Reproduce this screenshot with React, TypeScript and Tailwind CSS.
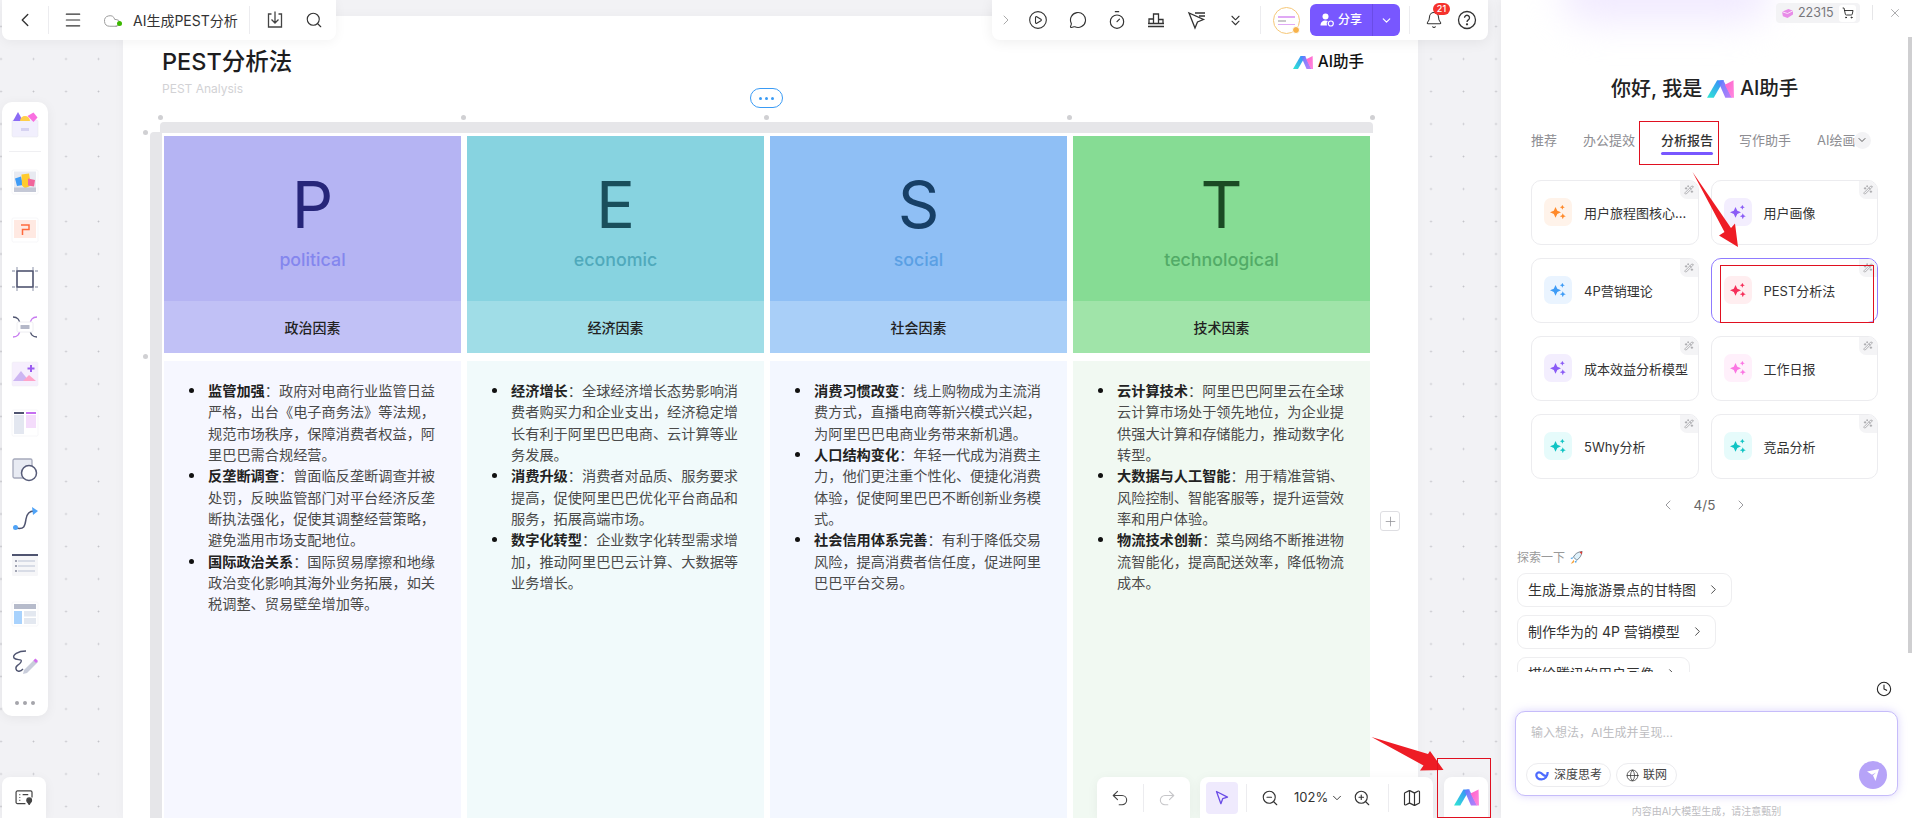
import {
  Bell,
  ChevronDown,
  ChevronLeft,
  ChevronRight,
  ChevronsDown,
  CirclePlay,
  Clock,
  Cloud,
  Globe,
  Map as MapIcon,
  Menu,
  MessageCircle,
  Plus,
  Redo2,
  Search,
  ShoppingCart,
  Timer,
  Undo2,
  WandSparkles,
  X,
  ZoomIn,
  ZoomOut,
} from "lucide-react";
import type { ReactNode } from "react";

const columns = [
  {
    letter: "P",
    en: "political",
    title: "政治因素",
    head: "bg-[#b5b4f3]",
    sub: "bg-[#c1c1f6]",
    body: "bg-[#f6f7ff]",
    ink: "text-[#262579]",
    enInk: "text-[#8486ee]",
    items: [
      ["监管加强", "政府对电商行业监管日益严格\uFF0C出台《电子商务法》等法规\uFF0C规范市场秩序\uFF0C保障消费者权益\uFF0C阿里巴巴需合规经营。"],
      ["反垄断调查", "曾面临反垄断调查并被处罚\uFF0C反映监管部门对平台经济反垄断执法强化\uFF0C促使其调整经营策略\uFF0C避免滥用市场支配地位。"],
      ["国际政治关系", "国际贸易摩擦和地缘政治变化影响其海外业务拓展\uFF0C如关税调整、贸易壁垒增加等。"],
    ],
  },
  {
    letter: "E",
    en: "economic",
    title: "经济因素",
    head: "bg-[#87d3e0]",
    sub: "bg-[#a0dde7]",
    body: "bg-[#f1fafb]",
    ink: "text-[#1a4f5c]",
    enInk: "text-[#4fa9bb]",
    items: [
      ["经济增长", "全球经济增长态势影响消费者购买力和企业支出\uFF0C经济稳定增长有利于阿里巴巴电商、云计算等业务发展。"],
      ["消费升级", "消费者对品质、服务要求提高\uFF0C促使阿里巴巴优化平台商品和服务\uFF0C拓展高端市场。"],
      ["数字化转型", "企业数字化转型需求增加\uFF0C推动阿里巴巴云计算、大数据等业务增长。"],
    ],
  },
  {
    letter: "S",
    en: "social",
    title: "社会因素",
    head: "bg-[#8fbff5]",
    sub: "bg-[#a9cff8]",
    body: "bg-[#f3f7ff]",
    ink: "text-[#173f66]",
    enInk: "text-[#5a9fe4]",
    items: [
      ["消费习惯改变", "线上购物成为主流消费方式\uFF0C直播电商等新兴模式兴起\uFF0C为阿里巴巴电商业务带来新机遇。"],
      ["人口结构变化", "年轻一代成为消费主力\uFF0C他们更注重个性化、便捷化消费体验\uFF0C促使阿里巴巴不断创新业务模式。"],
      ["社会信用体系完善", "有利于降低交易风险\uFF0C提高消费者信任度\uFF0C促进阿里巴巴平台交易。"],
    ],
  },
  {
    letter: "T",
    en: "technological",
    title: "技术因素",
    head: "bg-[#86dc94]",
    sub: "bg-[#a0e4a9]",
    body: "bg-[#f1f9f2]",
    ink: "text-[#1b4a24]",
    enInk: "text-[#52ab67]",
    items: [
      ["云计算技术", "阿里巴巴阿里云在全球云计算市场处于领先地位\uFF0C为企业提供强大计算和存储能力\uFF0C推动数字化转型。"],
      ["大数据与人工智能", "用于精准营销、风险控制、智能客服等\uFF0C提升运营效率和用户体验。"],
      ["物流技术创新", "菜鸟网络不断推进物流智能化\uFF0C提高配送效率\uFF0C降低物流成本。"],
    ],
  },
];

const templates = [
  { name: "用户旅程图核心...", box: "bg-[#fff3ea]", star: "#ff8a2b" },
  { name: "用户画像", box: "bg-[#f3eefe]", star: "#8b5cf6" },
  { name: "4P营销理论", box: "bg-[#eaf4ff]", star: "#3f9cf6" },
  { name: "PEST分析法", box: "bg-[#ffeef0]", star: "#f5305a", active: true },
  { name: "成本效益分析模型", box: "bg-[#f3eefe]", star: "#8b5cf6" },
  { name: "工作日报", box: "bg-[#fff0fb]", star: "#fb76e3" },
  { name: "5Why分析", box: "bg-[#e6fbfb]", star: "#12c4c4" },
  { name: "竞品分析", box: "bg-[#e6fbfb]", star: "#12c4c4" },
];

function Logo({ className }: { className?: string }) {
  return (
    <svg viewBox="0 0 28 18" className={className}>
      <defs>
        <linearGradient id="lg-a" x1="0" y1="1" x2="1" y2="0">
          <stop offset="0" stopColor="#2fe8d2" />
          <stop offset="1" stopColor="#3b82ff" />
        </linearGradient>
        <linearGradient id="lg-b" x1="0" y1="0" x2="1" y2="1">
          <stop offset="0" stopColor="#5b7bff" />
          <stop offset="1" stopColor="#b978f8" />
        </linearGradient>
        <linearGradient id="lg-c" x1="0" y1="0" x2="1" y2="1">
          <stop offset="0" stopColor="#ff5fc9" />
          <stop offset="1" stopColor="#ff8ae0" />
        </linearGradient>
      </defs>
      <path d="M0 18 10.500 0h7L7 18z" fill="url(#lg-a)" />
      <path d="M12 2 14.500 0h2.500l9 18h-7z" fill="url(#lg-b)" opacity="0.95" />
      <path d="M18.500 4.500 27.500 0l.5 18h-2.500z" fill="url(#lg-c)" />
    </svg>
  );
}

function Sparks({ color }: { color: string }) {
  return (
    <svg viewBox="0 0 16 16" className="w-[16px] h-[16px]" fill={color}>
      <path d="M5.500 3 7.300 6.700 11 8.300 7.300 10l-1.800 3.800L3.800 10 0 8.300l3.800-1.600z" />
      <path d="M12.300 .8l.8 1.700 1.700.8-1.700.7-.8 1.800-.7-1.800-1.700-.7 1.700-.8z" />
      <path d="M12.800 9.200l.9 2.100 2.100.9-2.100.9-.9 2.100-.9-2.100-2.100-.9 2.100-.9z" />
    </svg>
  );
}

function Divider({ className = "" }: { className?: string }) {
  return <div className={`w-px bg-[#ececef] ${className}`} />;
}

// the coloured tiles of the left rail, all drawn on a 26 box
function Tile({ children }: { children: ReactNode }) {
  return (
    <svg viewBox="0 0 26 26" className="w-[26px] h-[26px] overflow-visible">
      {children}
    </svg>
  );
}

const railIcons = [
  <Tile key="sticker">
    <rect x="0" y="8" width="26" height="17" rx="1.500" fill="#f1effd" stroke="#e4e4ea" strokeWidth="0.5" />
    <rect x="9" y="16" width="8" height="3" fill="#d6d2f1" />
    <path d="M1 9 6 0l5 9z" fill="#8b6bf5" />
    <path d="M8 9a5 5 0 0 1 10 0z" fill="#ffcf4a" />
    <path d="m15.500 4 6-3.500 4 5-4 4.500z" fill="#f96fe0" />
  </Tile>,
  <Tile key="notes">
    <rect x="0" y="0" width="26" height="24" rx="1.500" fill="#fff" stroke="#ececf0" strokeWidth="0.5" />
    <rect x="2" y="1.500" width="22" height="20" fill="#e8eaf1" />
    <path d="M3 8.500 9 6.500l2 8.500-6 1z" fill="#3f9cf6" />
    <path d="M9.500 4.500 17 3.500l2 12-6 3-3-3z" fill="#ffcb2e" />
    <path d="m16 8.500 7 1.500-1 6.500-6-1z" fill="#f1659b" />
    <rect x="2" y="17.500" width="22" height="4.500" fill="#c4c8d6" />
  </Tile>,
  <Tile key="ppt">
    <rect x="0" y="0" width="26" height="24" rx="1.500" fill="#fff" stroke="#ececf0" strokeWidth="0.5" />
    <rect x="2" y="2" width="22" height="18" fill="#ffe9e2" />
    <path d="M9 7h8v4.500h-6.500V17" fill="none" stroke="#ff6a3d" strokeWidth="1.500" />
  </Tile>,
  <Tile key="frame">
    <rect x="5" y="5" width="16" height="16" fill="none" stroke="#4f5470" strokeWidth="1.600" />
    <path d="M5 1v3M21 1v3M5 22v3M21 22v3M0 5h3M0 21h3M23 5h3M23 21h3" stroke="#a8adbd" strokeWidth="1.300" />
  </Tile>,
  <Tile key="mindmap">
    <path d="M1 3c5 0 6 3 7 6" fill="none" stroke="#4f5470" strokeWidth="1.300" />
    <path d="M25 3c-5 0-6 3-7 6" fill="none" stroke="#c77af0" strokeWidth="1.300" />
    <path d="M1 23c5 0 6-3 7-6" fill="none" stroke="#c77af0" strokeWidth="1.300" />
    <path d="M25 23c-5 0-6-3-7-6" fill="none" stroke="#4f5470" strokeWidth="1.300" />
    <rect x="5" y="8" width="16" height="10" rx="1.500" fill="#fff" stroke="#eeeef2" />
    <rect x="8.500" y="11" width="9" height="4" rx="0.500" fill="#b4b8c8" />
  </Tile>,
  <Tile key="image">
    <rect x="0" y="0" width="26" height="24" rx="1.500" fill="#f6effd" stroke="#ececf0" strokeWidth="0.5" />
    <path d="M1 19 9 9l8 10z" fill="#cdb6f2" />
    <path d="M11 19l6-6 7 6z" fill="#ffa4c9" />
    <path d="M19 3v7M15.500 6.500h7" stroke="#9a5cf0" strokeWidth="2" />
  </Tile>,
  <Tile key="columns">
    <rect x="0" y="0" width="26" height="26" rx="1.500" fill="#fff" stroke="#ececf0" strokeWidth="0.5" />
    <rect x="2" y="2" width="10" height="2" fill="#4f5470" />
    <rect x="14" y="2" width="10" height="2" fill="#c56ff0" />
    <rect x="2" y="5" width="10" height="19" fill="#e3e7f0" />
    <rect x="14" y="5" width="10" height="13" fill="#f4dcfb" />
  </Tile>,
  <Tile key="shape">
    <rect x="1" y="1" width="19" height="19" rx="1.500" fill="#e8ebf3" stroke="#a5a9bb" strokeWidth="1.300" />
    <circle cx="17" cy="15" r="7.500" fill="#fff" stroke="#565b78" strokeWidth="1.500" />
  </Tile>,
  <Tile key="connector">
    <path d="M4 22c9 2 9-3 10-9s4-8 8-8" fill="none" stroke="#4f5470" strokeWidth="1.500" />
    <circle cx="3.500" cy="21.500" r="2.500" fill="#4fa3f7" />
    <path d="m20 1 6 4-5 4z" fill="#4fa3f7" />
  </Tile>,
  <Tile key="list">
    <rect x="0" y="1" width="26" height="21" rx="1.500" fill="#f6f6f8" />
    <rect x="0" y="0" width="26" height="2" fill="#4f5470" />
    <path d="M6 7h17M6 12h17M6 17h17" stroke="#d8dce6" strokeWidth="2" />
    <path d="M4 6v2M4 11v2M4 16v2" stroke="#4f5470" strokeWidth="1" />
  </Tile>,
  <Tile key="table">
    <rect x="0" y="0" width="26" height="24" rx="1.500" fill="#fff" stroke="#ececf0" strokeWidth="0.5" />
    <rect x="2" y="2" width="22" height="5" fill="#b6bbcb" />
    <rect x="2" y="9" width="8" height="13" fill="#a8d2fd" />
    <rect x="12" y="9" width="12" height="5.500" fill="#e3e8f0" />
    <rect x="12" y="16" width="12" height="6" fill="#e3e8f0" />
  </Tile>,
  <Tile key="pen">
    <path d="M14 1C6 1 0 5 2 8s9 0 7 4-6 3-5 7 5 2 7 0" fill="none" stroke="#4f5470" strokeWidth="1.400" />
    <path d="m12 20 11-11 3 3-11 11-4 1z" fill="#c9cddb" />
    <path d="m21.500 10.500 2-2 2.500 2.500-2 2z" fill="#d66cf0" />
  </Tile>,
];

function Rail() {
  return (
    <div className="absolute left-[2px] top-[102px] w-[46px] h-[614px] bg-white rounded-[10px] shadow-[0_2px_12px_rgba(0,0,0,0.06)] flex flex-col items-center pt-[10px]">
      {railIcons[0]}
      <div className="w-[32px] h-px bg-[#efeff2] mt-[13px] mb-[18px]" />
      <div className="flex flex-col items-center gap-[22px]">{railIcons.slice(1)}</div>
      <div className="flex gap-[4px] mt-[25px]">
        <span className="w-[4px] h-[4px] rounded-full bg-[#a5a5ab]" />
        <span className="w-[4px] h-[4px] rounded-full bg-[#a5a5ab]" />
        <span className="w-[4px] h-[4px] rounded-full bg-[#a5a5ab]" />
      </div>
    </div>
  );
}

function TopLeftBar() {
  return (
    <div className="absolute left-[2px] top-0 w-[334px] h-[40px] bg-white rounded-b-[8px] shadow-[0_2px_12px_rgba(0,0,0,0.05)] flex items-center text-[#333]">
      <div className="w-[46px] flex justify-center">
        <ChevronLeft size={22} strokeWidth={1.5} />
      </div>
      <Divider className="h-[28px]" />
      <Menu size={20} strokeWidth={1.4} className="ml-[14px]" />
      <div className="relative ml-[20px] w-[19px] h-[16px]">
        <Cloud size={18} strokeWidth={1.3} className="text-[#999]" />
        <span className="absolute right-[0px] bottom-[2px] w-[5px] h-[5px] rounded-full bg-[#3cb800]" />
      </div>
      <span className="ml-[11px] text-[14px] text-[#333] w-[116px] whitespace-nowrap">AI生成PEST分析</span>
      <Divider className="h-[28px]" />
      <svg viewBox="0 0 20 20" className="ml-[15px] w-[20px] h-[20px]" fill="none" stroke="#444" strokeWidth="1.300">
        <path d="M6.500 4H3.500v13h13V4h-3M10 1.500V13M6.500 9.500 10 13l3.500-3.500" />
      </svg>
      <Search size={18} strokeWidth={1.5} className="ml-[20px]" />
    </div>
  );
}

function TopRightBar() {
  return (
    <div className="absolute left-[992px] top-0 w-[496px] h-[40px] bg-white rounded-b-[8px] shadow-[0_2px_14px_rgba(0,0,0,0.07)] flex items-center text-[#333]">
      <ChevronRight size={16} strokeWidth={1.5} className="ml-[6px] text-[#aaa]" />
      <CirclePlay size={20} strokeWidth={1.3} className="ml-[14px]" />
      <MessageCircle size={18} strokeWidth={1.5} className="ml-[21px]" />
      <Timer size={20} strokeWidth={1.4} className="ml-[20px]" />
      <svg viewBox="0 0 18 18" className="ml-[20px] w-[18px] h-[18px]" fill="none" stroke="#333" strokeWidth="1.300">
        <path d="M2 12.500V8h4.500V3h5v5.500H16v4M6.500 8v4.500M11.500 8.500v4M1 15.500h16M1 12.500h16" />
      </svg>
      <svg viewBox="0 0 20 20" className="ml-[22px] w-[20px] h-[20px]" fill="none" stroke="#333" strokeWidth="1.300">
        <path d="m2 3 6 15 2.500-6 6-2.500zM8 3h10M12 6h6" />
      </svg>
      <ChevronsDown size={17} strokeWidth={1.5} className="ml-[20px]" />
      <Divider className="ml-[16px] h-[28px]" />
      <div className="relative ml-[12px] w-[27px] h-[27px] rounded-full border border-[#f6c777] bg-white flex flex-col justify-center gap-[2px] px-[4px] overflow-visible">
        <span className="h-[2px] bg-[#e0a9f5]" />
        <span className="h-[2px] w-[8px] bg-[#c9c9c9]" />
        <span className="h-[1px] bg-[#e0a9f5]" />
        <span className="absolute -right-[1px] -bottom-[1px] w-[8px] h-[8px] rounded-full bg-[#f7b24a] border border-white" />
      </div>
      <div className="ml-[10px] w-[90px] h-[32px] rounded-[6px] bg-[#7857ff] text-white flex items-center">
        <div className="w-[62px] flex items-center justify-center gap-[4px]">
          <svg viewBox="0 0 14 14" className="w-[14px] h-[14px]" fill="#fff">
            <circle cx="5.500" cy="3.500" r="3" />
            <path d="M.5 12.500c0-3 2-5 5-5 1 0 1.700.2 2.300.6A3.800 3.800 0 0 0 7 12.500z" />
            <circle cx="10.800" cy="10.500" r="2.500" fill="none" stroke="#fff" strokeWidth="1.200" />
          </svg>
          <span className="text-[12px] font-medium">分享</span>
        </div>
        <div className="w-px h-full bg-[#6a4ce6]" />
        <ChevronDown size={13} strokeWidth={2.2} className="ml-[7px]" />
      </div>
      <Divider className="ml-[9px] h-[28px]" />
      <div className="relative ml-[15px]">
        <Bell size={18} strokeWidth={1.4} />
        <span className="absolute -top-[8px] left-[8px] px-[3px] h-[12px] min-w-[17px] rounded-full bg-[#f5322d] text-white text-[9px] leading-[12px] font-medium text-center">
          21
        </span>
      </div>
      <svg viewBox="0 0 20 20" className="ml-[14px] w-[20px] h-[20px]" fill="none" stroke="#333" strokeWidth="1.300">
        <circle cx="10" cy="10" r="8.500" />
        <path d="M7.500 7.800a2.500 2.500 0 1 1 3.800 2.100c-.9.600-1.300 1-1.300 2.100" />
        <circle cx="10" cy="14.300" r="0.500" fill="#333" />
      </svg>
    </div>
  );
}

function BottomBar() {
  return (
    <>
      <div className="absolute left-[1097px] top-[777px] w-[93px] h-[41px] bg-white rounded-t-[8px] shadow-[0_2px_12px_rgba(0,0,0,0.05)] flex items-center">
        <div className="w-[46px] flex justify-center">
          <Undo2 size={20} strokeWidth={1.3} className="text-[#444]" />
        </div>
        <Divider className="h-[28px]" />
        <div className="flex-1 flex justify-center">
          <Redo2 size={20} strokeWidth={1.3} className="text-[#c6c6c9]" />
        </div>
      </div>
      <div className="absolute left-[1200px] top-[777px] w-[233px] h-[41px] bg-white rounded-t-[8px] shadow-[0_2px_12px_rgba(0,0,0,0.05)] flex items-center text-[#333]">
        <div className="ml-[6px] w-[32px] h-[32px] rounded-[4px] bg-[#efeafd] flex items-center justify-center">
          <svg viewBox="0 0 16 16" className="w-[16px] h-[16px]" fill="none" stroke="#6a4ce6" strokeWidth="1.300">
            <path d="m2.500 1.500 11 5.700-4.800 1.500-1.800 5z" strokeLinejoin="round" />
          </svg>
        </div>
        <Divider className="ml-[8px] h-[28px]" />
        <ZoomOut size={18} strokeWidth={1.5} className="ml-[14px]" />
        <span className="ml-[15px] text-[13px] w-[32px]">102%</span>
        <ChevronDown size={14} strokeWidth={1.6} className="ml-[4px]" />
        <ZoomIn size={18} strokeWidth={1.5} className="ml-[9px]" />
        <Divider className="ml-[17px] h-[28px]" />
        <MapIcon size={20} strokeWidth={1.4} className="ml-[13px]" />
      </div>
      <div className="absolute left-[1444px] top-[777px] w-[44px] h-[41px] bg-white rounded-t-[8px] shadow-[0_2px_12px_rgba(0,0,0,0.05)] flex items-center justify-center">
        <Logo className="w-[25px] h-[17px]" />
      </div>
      <div className="absolute left-[2px] top-[777px] w-[44px] h-[41px] bg-white rounded-t-[8px] shadow-[0_2px_12px_rgba(0,0,0,0.05)] flex items-center justify-center">
        <svg viewBox="0 0 20 16" className="w-[19px] h-[15px]" fill="none" stroke="#444" strokeWidth="1.300">
          <path d="M11 14.500H2.500a1.500 1.500 0 0 1-1.500-1.500V2.500A1.500 1.500 0 0 1 2.500 1h14A1.500 1.500 0 0 1 18 2.500V8M4.500 5h1M4.500 8h1M4.500 11h1M8 5h6" />
          <circle cx="15" cy="11" r="2.500" fill="#444" />
          <path d="M13.500 13 15 15.500l1.500-2.500" fill="#444" />
        </svg>
      </div>
    </>
  );
}

function Handle({ className }: { className: string }) {
  return <span className={`absolute w-[5px] h-[5px] rounded-full bg-[#d0d0d3] ${className}`} />;
}

function Column({ col }: { col: (typeof columns)[number] }) {
  return (
    <div className="flex flex-col h-full">
      <div className={`h-[165px] flex flex-col items-center pt-[36px] ${col.head}`}>
        <div className={`text-[65px] leading-[65px] ${col.ink}`}>{col.letter}</div>
        <div className={`mt-[11px] text-[17.8px] leading-[24px] font-medium ${col.enInk}`}>{col.en}</div>
      </div>
      <div className={`h-[52px] flex items-center justify-center text-[14px] font-medium text-[#222] ${col.sub}`}>
        {col.title}
      </div>
      <ul
        className={`mt-[8px] flex-1 pl-[44px] pr-[24px] pt-[19px] text-[14.2px] leading-[21.33px] text-[#4a4a4a] ${col.body}`}
      >
        {col.items.map(([lead, text]) => (
          <li key={lead} className="relative">
            <span className="absolute -left-[19px] top-[8px] w-[5px] h-[5px] rounded-full bg-[#111]" />
            <strong className="font-bold text-[#222]">{lead}</strong>
            {"\uFF1A"}
            {text}
          </li>
        ))}
      </ul>
    </div>
  );
}

function Board() {
  return (
    <div className="absolute left-[123px] top-[16px] w-[1295px] h-[802px] bg-white shadow-[0_0_12px_rgba(0,0,0,0.03)] flex flex-col">
      <div className="flex justify-between pl-[39px] pr-[54px] pt-[30px]">
        <div>
          <h1 className="text-[23.5px] leading-[32px] font-medium text-[#1d1d1f]">PEST分析法</h1>
          <p className="mt-[3px] text-[12px] leading-[16px] text-[#d2d2d5]">PEST Analysis</p>
        </div>
        <div className="flex items-center gap-[5px] h-[32px]">
          <Logo className="w-[20px] h-[15px]" />
          <span className="text-[15.5px] font-medium text-[#111]">AI助手</span>
        </div>
      </div>

      <div className="relative ml-[27px] mt-[25px] flex-1 flex flex-col min-h-0">
        <Handle className="left-[7.500px] -top-[7.500px]" />
        <Handle className="left-[310.500px] -top-[7.500px]" />
        <Handle className="left-[613.500px] -top-[7.500px]" />
        <Handle className="left-[917px] -top-[7.500px]" />
        <Handle className="left-[1219.500px] -top-[7.500px]" />
        <Handle className="-left-[7.500px] top-[7.500px]" />
        <Handle className="-left-[7.500px] top-[231.500px]" />
        <div className="absolute left-[600px] -top-[34px] w-[33px] h-[20px] rounded-full border border-[#3a9bf5] bg-white flex items-center justify-center gap-[3px]">
          <span className="w-[3px] h-[3px] rounded-full bg-[#3a9bf5]" />
          <span className="w-[3px] h-[3px] rounded-full bg-[#3a9bf5]" />
          <span className="w-[3px] h-[3px] rounded-full bg-[#3a9bf5]" />
        </div>

        <div className="ml-[10px] w-[1213px] h-[11px] bg-[#e6e6e9] rounded-t-[4px]" />
        <div className="flex-1 flex min-h-0 -mt-[1px]">
          <div className="w-[12px] bg-[#e6e6e9] rounded-tl-[4px]" />
          <div className="grid grid-cols-[repeat(4,297px)] gap-[6px] pl-[2px] pt-[4px] h-full">
            {columns.map((c) => (
              <Column key={c.letter} col={c} />
            ))}
          </div>
        </div>
      </div>

      <div className="absolute left-[1257px] top-[495px] w-[20px] h-[20px] rounded-[3px] border border-[#dedee2] bg-white flex items-center justify-center text-[#8f8f94]">
        <Plus size={15} strokeWidth={1.2} />
      </div>
    </div>
  );
}

function TemplateCard({ t }: { t: (typeof templates)[number] }) {
  return (
    <div
      className={`relative h-[65px] rounded-[10px] border flex items-center pl-[12px] overflow-hidden ${
        t.active ? "border-[#8f7bff]" : "border-[#ececef]"
      }`}
    >
      <div className={`w-[28px] h-[28px] rounded-[7px] flex items-center justify-center ${t.box}`}>
        <Sparks color={t.star} />
      </div>
      <span className="ml-[12px] pt-[3px] text-[13px] text-[#333] whitespace-nowrap">{t.name}</span>
      <div className="absolute right-0 top-0 w-[18px] h-[18px] bg-[#f4f4f6] rounded-bl-[7px] flex items-center justify-center">
        <WandSparkles size={10} strokeWidth={1.8} className="text-[#9a9a9f]" />
      </div>
    </div>
  );
}

function Chip({ text }: { text: string }) {
  return (
    <div className="h-[34px] shrink-0 self-start flex items-center gap-[10px] px-[10px] rounded-[9px] border border-[#eeeef0] text-[14px] text-[#333]">
      <span>{text}</span>
      <ChevronRight size={15} strokeWidth={1.4} />
    </div>
  );
}

function AssistantPanel() {
  return (
    <aside className="relative w-[411px] h-full bg-white shadow-[-2px_0_8px_rgba(0,0,0,0.04)] flex flex-col overflow-hidden">
      <div className="absolute left-[60px] -top-[36px] w-[210px] h-[58px] rounded-full bg-[#f1eaff] blur-[18px]" />
      <div className="absolute right-0 top-[37px] w-[4px] h-[616px] bg-[#cfcfd1]" />

      <div className="relative h-[26px] flex items-start justify-end pt-[3px] pr-[10px]">
        <div className="w-[84px] h-[20px] rounded-[4px] bg-[#f3f3f5] flex items-center pl-[5px]">
          <svg viewBox="0 0 14 12" className="w-[13px] h-[11px]">
            <path d="M1 4 8 1l5 2v4l-6 4-5-2z" fill="#e88ce8" />
            <path d="M1 4l6 2 6-3" fill="none" stroke="#fff" strokeWidth="0.8" />
          </svg>
          <span className="ml-[4px] text-[12.500px] text-[#77777b] w-[38px]">22315</span>
          <div className="ml-[3px] w-[17px] h-[17px] rounded-[3px] bg-white flex items-center justify-center">
            <ShoppingCart size={12} strokeWidth={1.8} className="text-[#222]" />
          </div>
        </div>
        <div className="ml-[12px] mt-[2px] w-px h-[15px] bg-[#e6e6e8]" />
        <X size={14} strokeWidth={1.4} className="ml-[15px] mt-[3px] text-[#9a9a9d]" />
      </div>

      <div className="mt-[48px] h-[30px] flex items-center pl-[110px] text-[20px] font-medium text-[#222]">
        <span>你好, 我是</span>
        <Logo className="ml-[5px] w-[27px] h-[18px]" />
        <span className="ml-[6px] text-[19.5px]">AI助手</span>
      </div>

      <div className="mt-[26px] pl-[30px] h-[22px] flex items-center gap-[26px] text-[13px] text-[#8d8d92]">
        <span>推荐</span>
        <span>办公提效</span>
        <span className="relative font-medium text-[#333]">
          分析报告
          <span className="absolute left-0 right-0 -bottom-[5px] h-[3px] rounded-full bg-[#7857ff]" />
        </span>
        <span>写作助手</span>
        <span className="relative">
          AI绘画
          <span className="absolute -right-[15px] top-[1px] w-[17px] h-[17px] rounded-full bg-[#f3f3f5] flex items-center justify-center text-[#333]">
            <ChevronDown size={12} strokeWidth={1.6} />
          </span>
        </span>
      </div>

      <div className="mt-[28px] ml-[30px] w-[347px] grid grid-cols-2 gap-x-[12px] gap-y-[13px]">
        {templates.map((t) => (
          <TemplateCard key={t.name} t={t} />
        ))}
      </div>

      <div className="mt-[16px] ml-[30px] w-[347px] flex items-center justify-center gap-[18px] text-[#8a8a8f]">
        <ChevronLeft size={16} strokeWidth={1.3} />
        <span className="text-[13.500px] text-[#666]">4/5</span>
        <ChevronRight size={16} strokeWidth={1.3} />
      </div>

      <div className="mt-[35px] pl-[16px] flex items-center gap-[4px] text-[12px] leading-[16px] text-[#999]">
        探索一下
        <svg viewBox="0 0 16 16" className="w-[14px] h-[14px]">
          <path d="M5 7c2-4 5-6 10-6.500C14.500 5 12 8.500 9 10.500z" fill="#dff1fb" stroke="#3a4a5a" strokeWidth="0.7" />
          <path d="M12 1.200 15 .5 14.500 4z" fill="#e4352b" />
          <path d="M5 7 1.500 8l2 1.500zM9 10.500 8 14l-1.500-2z" fill="#4aa3e8" />
          <path d="M5.500 10 2 14.500l2-.5 2-1.500z" fill="#f5a13a" />
        </svg>
      </div>
      <div className="mt-[7px] pl-[16px] h-[100px] flex flex-col gap-[8px] overflow-hidden">
        <Chip text="生成上海旅游景点的甘特图" />
        <Chip text="制作华为的 4P 营销模型" />
        <Chip text="描绘腾讯的用户画像" />
      </div>

      <div className="mt-[9px] pr-[20px] flex justify-end">
        <Clock size={16} strokeWidth={1.6} className="text-[#222]" />
      </div>

      <div className="relative mt-[14px] ml-[14px] w-[383px] h-[86px] rounded-[10px] border-[1.5px] border-[#c6bcfa] shadow-[0_0_8px_rgba(150,130,250,0.35)] bg-white">
        <p className="pl-[15px] pt-[12px] text-[12px] leading-[18px] text-[#bdbdc1]">{"输入想法\uFF0CAI生成并呈现..."}</p>
        <div className="absolute left-[10px] bottom-[8px] flex gap-[5px] text-[12px] text-[#444]">
          <div className="h-[24px] w-[85px] rounded-full border border-[#ececef] flex items-center justify-center gap-[5px]">
            <svg viewBox="0 0 16 12" className="w-[14px] h-[11px]" fill="none" stroke="#4d6bfe" strokeWidth="2.600">
              <path d="M14.500 2c0 5-3 8.500-7 8.500S1.500 8 1.500 5.500 4 1.500 6.500 3s4 4 6.500 3.500" />
            </svg>
            <span>深度思考</span>
          </div>
          <div className="h-[24px] w-[61px] rounded-full border border-[#ececef] flex items-center justify-center gap-[4px]">
            <Globe size={13} strokeWidth={1.4} className="text-[#333]" />
            <span>联网</span>
          </div>
        </div>
        <div className="absolute right-[10px] bottom-[6px] w-[28px] h-[28px] rounded-full bg-[#b6a3f8] flex items-center justify-center">
          <svg viewBox="0 0 14 14" className="w-[14px] h-[14px]" fill="#fff">
            <path d="M1 3.500 13 1 9.500 13 7 7.500l3-3-4 2.200z" />
          </svg>
        </div>
      </div>

      <p className="mt-[8px] ml-[14px] w-[383px] text-center text-[10px] leading-[14px] text-[#bdbdc1] whitespace-nowrap">
        {"内容由AI大模型生成\uFF0C请注意甄别"}
      </p>
    </aside>
  );
}

function Annotations() {
  return (
    <>
      <svg viewBox="0 0 1912 818" className="absolute inset-0 w-[1912px] h-[818px] pointer-events-none">
        <path d="M1692.500 172 1731 228l4-4.500 3 23.500-19-11.500 5.500-3.500z" fill="#ee1c25" />
        <path d="M1371.500 737 1428 754l2-3 13.500 19-23.500.500 3.500-5z" fill="#ee1c25" />
      </svg>
      <div className="absolute left-[1639px] top-[121px] w-[80px] h-[44px] border border-[#e01020]" />
      <div className="absolute left-[1720px] top-[265px] w-[154px] h-[58px] border border-[#e01020]" />
      <div className="absolute left-[1437px] top-[758px] w-[54px] h-[60px] border border-[#e01020]" />
    </>
  );
}

export default function App() {
  return (
    <div className="relative w-[1912px] h-[818px] overflow-hidden flex font-['Inter','Noto_Sans_CJK_SC',sans-serif]">
      <main className="relative w-[1501px] h-full overflow-hidden bg-[#f2f2f5] bg-[radial-gradient(circle,#c4c4c9_0.8px,transparent_1.1px)] bg-[size:32.5px_32.5px] bg-[position:-15.250px_10.250px]">
        <Board />
        <TopLeftBar />
        <TopRightBar />
        <Rail />
        <BottomBar />
      </main>
      <AssistantPanel />
      <Annotations />
    </div>
  );
}
